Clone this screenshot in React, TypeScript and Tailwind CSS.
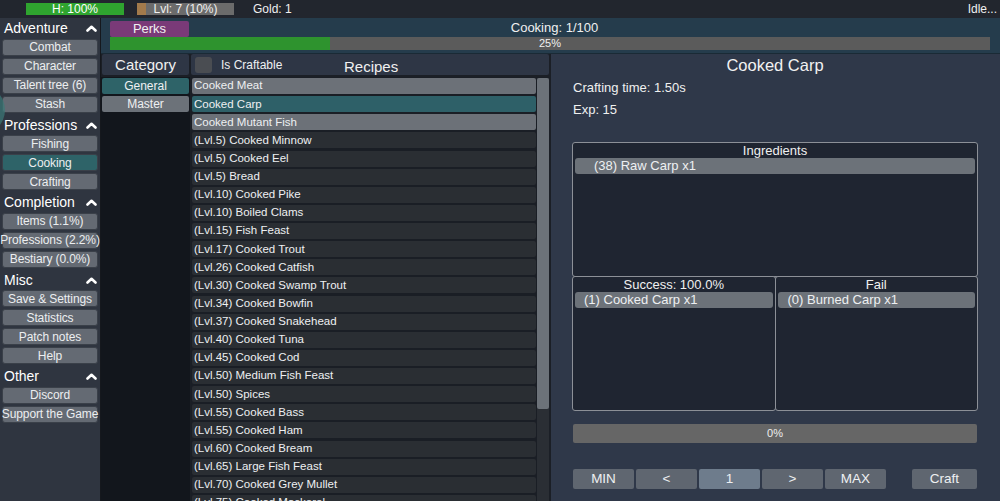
import React from 'react';

const sections: { title: string; items: string[] }[] = [
  { title: 'Adventure', items: ['Combat', 'Character', 'Talent tree (6)', 'Stash'] },
  { title: 'Professions', items: ['Fishing', 'Cooking', 'Crafting'] },
  { title: 'Completion', items: ['Items (1.1%)', 'Professions (2.2%)', 'Bestiary (0.0%)'] },
  { title: 'Misc', items: ['Save & Settings', 'Statistics', 'Patch notes', 'Help'] },
  { title: 'Other', items: ['Discord', 'Support the Game'] },
];

const recipes = [
  'Cooked Meat',
  'Cooked Carp',
  'Cooked Mutant Fish',
  '(Lvl.5) Cooked Minnow',
  '(Lvl.5) Cooked Eel',
  '(Lvl.5) Bread',
  '(Lvl.10) Cooked Pike',
  '(Lvl.10) Boiled Clams',
  '(Lvl.15) Fish Feast',
  '(Lvl.17) Cooked Trout',
  '(Lvl.26) Cooked Catfish',
  '(Lvl.30) Cooked Swamp Trout',
  '(Lvl.34) Cooked Bowfin',
  '(Lvl.37) Cooked Snakehead',
  '(Lvl.40) Cooked Tuna',
  '(Lvl.45) Cooked Cod',
  '(Lvl.50) Medium Fish Feast',
  '(Lvl.50) Spices',
  '(Lvl.55) Cooked Bass',
  '(Lvl.55) Cooked Ham',
  '(Lvl.60) Cooked Bream',
  '(Lvl.65) Large Fish Feast',
  '(Lvl.70) Cooked Grey Mullet',
  '(Lvl.75) Cooked Mackerel',
];

function Caret() {
  return (
    <svg width="11" height="7" viewBox="0 0 11 7" className="mr-[3px]">
      <path d="M1.5 5.5 L5.5 1.8 L9.5 5.5" stroke="white" strokeWidth="2.6" fill="none" strokeLinecap="round" strokeLinejoin="round" />
    </svg>
  );
}

function Sidebar() {
  return (
    <div className="relative w-[100px] shrink-0 overflow-hidden bg-[#2f3540]">
      {/* partial scroll knob peeking at the left edge */}
      <div className="absolute left-[-45px] top-[67px] h-[50px] w-[50px] rounded-full bg-[#3a7a78]/70" />
      {sections.map((s) => (
        <div key={s.title}>
          <div className="flex h-[20.5px] items-center justify-between pl-[4px] pt-[1px] text-[14px] text-white">
            <span>{s.title}</span>
            <Caret />
          </div>
          {s.items.map((it) => (
            <div key={it} className="flex h-[19px] items-start justify-center">
              <div
                className={
                  'flex h-[17px] w-[96px] items-center justify-center whitespace-nowrap rounded-[3px] border border-[#3a4049] text-[12px] tracking-[-0.1px] text-[#eceef0] ' +
                  (it === 'Cooking' ? 'bg-[#2e6368]' : 'bg-[#646a73]')
                }
              >
                {it}
              </div>
            </div>
          ))}
        </div>
      ))}
    </div>
  );
}

function Box({ title, children, className }: { title: string; children?: React.ReactNode; className?: string }) {
  return (
    <div className={'flex flex-col rounded-[3px] border border-[#8c9097] bg-[#1f2531] ' + (className ?? '')}>
      <div className="flex h-[15px] items-center justify-center text-[13px] text-[#f0f0f0]">{title}</div>
      <div className="px-[2px]">{children}</div>
    </div>
  );
}

function ItemRow({ text, pad }: { text: string; pad: string }) {
  return (
    <div className={'flex h-[16px] items-center rounded-[3px] bg-[#6c7279] text-[13px] text-[#eef0f2] ' + pad}>{text}</div>
  );
}

export default function App() {
  return (
    <div className="flex h-[501px] w-[1000px] flex-col overflow-hidden bg-[#1b1f26] font-['Liberation_Sans',Arial,sans-serif] text-white">
      {/* top status bar */}
      <div className="flex h-[18px] shrink-0 items-center bg-[#22262e] pl-[26px] text-[12px]">
        <div className="flex h-[12px] w-[98px] items-center justify-center bg-[#2fa42f] text-white">H: 100%</div>
        <div className="relative ml-[13px] flex h-[12px] w-[97px] items-center justify-center bg-[#6b6b6b] text-[#f0f0f0]">
          <div className="absolute left-0 top-0 h-full w-[9px] bg-[#a27a4b]" />
          <span className="relative">Lvl: 7 (10%)</span>
        </div>
        <div className="ml-[19px] text-[#f0f0f0]">Gold: 1</div>
        <div className="ml-auto pr-[3px] text-[#f0f0f0]">Idle...</div>
      </div>

      <div className="flex min-h-0 flex-1">
        <Sidebar />
        <div className="w-[1px] bg-[#15181d]" />

        <div className="flex min-w-0 flex-1 flex-col">
          {/* cooking header */}
          <div className="h-[36px] shrink-0 border-b border-[#1a2a35] bg-[#253c4c] px-[9px] pt-[2px]">
            <div className="relative flex h-[17px] items-center">
              <div className="flex h-[16px] w-[79px] items-center justify-center rounded-[2px] bg-[#7a3a78] text-[13px] text-[#f0f0f0]">
                Perks
              </div>
              <div className="absolute inset-x-0 top-0 flex h-[16px] items-center justify-center pl-[8px] text-[13px] text-[#f0f0f0]">
                Cooking: 1/100
              </div>
            </div>
            <div className="relative mr-[1px] flex h-[13px] items-center bg-[#5b5b5b]">
              <div className="absolute left-0 top-0 h-full w-[25%] bg-[#2e932e]" />
              <span className="relative w-full text-center text-[11px] text-[#f0f0f0]">25%</span>
            </div>
          </div>

          <div className="flex min-h-0 flex-1">
            {/* category column */}
            <div className="flex w-[89px] shrink-0 flex-col">
              <div className="mx-[1px] flex h-[21px] items-center justify-center rounded-[2px] bg-[#2e3645] pt-[2px] text-[15px] text-[#f0f0f0]">
                Category
              </div>
              <div className="mt-[2px] flex flex-1 flex-col gap-[2px] bg-[#12161c] px-[1px] pt-[1px]">
                <div className="flex h-[16px] items-center justify-center rounded-[2px] bg-[#2e6368] text-[12px] text-[#eef0f2]">General</div>
                <div className="flex h-[16px] items-center justify-center rounded-[2px] bg-[#6c7279] text-[12px] text-[#eef0f2]">Master</div>
              </div>
            </div>
            <div className="w-[1px] bg-[#1b1f26]" />

            {/* recipes column */}
            <div className="flex w-[358px] shrink-0 flex-col">
              <div className="relative flex h-[21px] items-center rounded-[2px] bg-[#2e3645] pl-[4px] pr-[2px]">
                <div className="h-[16px] w-[17px] rounded-[3px] bg-[#4a4d52]" />
                <span className="ml-[9px] text-[12px] text-[#eef0f2]">Is Craftable</span>
                <span className="absolute left-[153px] top-[2px] text-[15px] text-[#f0f0f0]">Recipes</span>
              </div>
              <div className="mt-[2px] flex min-h-0 flex-1 bg-[#1a1e25] pt-[1px]">
                <div className="flex min-w-0 flex-1 flex-col gap-[2.14px] overflow-hidden pl-[1px]">
                  {recipes.map((r, i) => (
                    <div
                      key={r}
                      className={
                        'flex h-[16px] shrink-0 items-center rounded-[2px] pl-[2px] text-[11.5px] text-[#eef0f2] ' +
                        (i === 1 ? 'bg-[#2e6068]' : i === 0 || i === 2 ? 'bg-[#6c7178]' : 'bg-[#2a2e33]')
                      }
                    >
                      {r}
                    </div>
                  ))}
                </div>
                <div className="ml-[1px] w-[12px] shrink-0 bg-[#2a2e34]">
                  <div className="h-[331px] rounded-[2px] bg-[#6c7279]" />
                </div>
              </div>
            </div>
            <div className="w-[2px] bg-[#1b1f26]" />

            {/* detail panel */}
            <div className="flex min-w-0 flex-1 flex-col bg-[#2f3849] pl-[21px] pr-[22px]">
              <div className="flex h-[22px] items-center justify-center pt-[1px] text-[16.5px] text-[#f2f2f2]">Cooked Carp</div>
              <div className="mt-[1px] flex h-[22px] items-center pl-[1px] text-[13px] text-[#f0f0f0]">Crafting time: 1.50s</div>
              <div className="flex h-[22px] items-center pl-[1px] text-[13px] text-[#f0f0f0]">Exp: 15</div>
              <Box title="Ingredients" className="mt-[21px] h-[135px]">
                <ItemRow text="(38) Raw Carp x1" pad="pl-[19px]" />
              </Box>
              <div className="mt-[-1px] flex">
                <Box title="Success: 100.0%" className="h-[135px] flex-1">
                  <ItemRow text="(1) Cooked Carp x1" pad="pl-[9px]" />
                </Box>
                <Box title="Fail" className="ml-[-1px] h-[135px] flex-1">
                  <ItemRow text="(0) Burned Carp x1" pad="pl-[10px]" />
                </Box>
              </div>
              <div className="mx-[1px] mt-[13px] flex h-[19px] items-center justify-center rounded-[2px] bg-[#666666] text-[11px] text-[#eeeeee]">
                0%
              </div>
              <div className="mx-[1px] mt-[26px] flex h-[20px] text-[13.5px] text-[#eef0f2]">
                <div className="flex w-[61px] items-center justify-center rounded-[2px] bg-[#5f6670]">MIN</div>
                <div className="ml-[2px] flex w-[61px] items-center justify-center rounded-[2px] bg-[#5f6670]">&lt;</div>
                <div className="ml-[2px] flex w-[61px] items-center justify-center rounded-[2px] bg-[#6e7c8c]">1</div>
                <div className="ml-[2px] flex w-[61px] items-center justify-center rounded-[2px] bg-[#5f6670]">&gt;</div>
                <div className="ml-[2px] flex w-[61px] items-center justify-center rounded-[2px] bg-[#5f6670]">MAX</div>
                <div className="ml-auto flex w-[65px] items-center justify-center rounded-[2px] bg-[#5f6670]">Craft</div>
              </div>
            </div>
          </div>
        </div>
      </div>
    </div>
  );
}
